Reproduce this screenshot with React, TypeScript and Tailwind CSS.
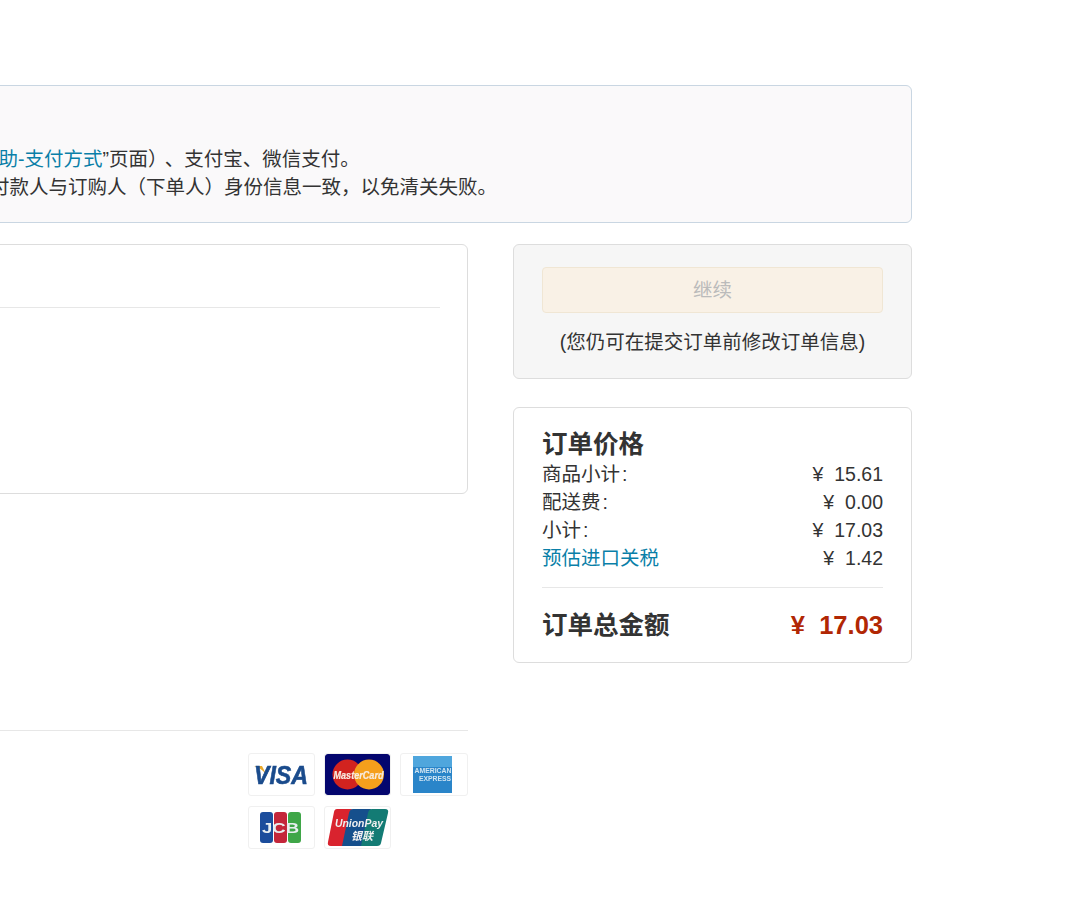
import React from "react";

const font = { fontFamily: '"Liberation Sans", "Noto Sans CJK SC", sans-serif' };

const rows = [
  { label: "商品小计", value: "15.61" },
  { label: "配送费", value: "0.00" },
  { label: "小计", value: "17.03" },
];

function CardFrame({ children }: { children: React.ReactNode }) {
  return (
    <div className="h-[43px] rounded-[3px] border border-[#f0f0f0] bg-white flex items-center justify-center overflow-hidden">
      {children}
    </div>
  );
}

function Visa() {
  return (
    <svg className="blur-[0.4px]" width="60" height="30" viewBox="0 0 60 30">
      <path d="M2 6 L10 6 L14 14 Q9 8 2 6 Z" fill="#e9a92c" />
      <text x="2" y="24" fontFamily="Liberation Sans" fontWeight="700" fontStyle="italic" fontSize="25" fill="#1a4b8c" stroke="#1a4b8c" strokeWidth="0.6" textLength="54" lengthAdjust="spacingAndGlyphs">
        VISA
      </text>
    </svg>
  );
}

function MasterCard() {
  return (
    <svg className="blur-[0.4px]" width="65" height="41" viewBox="0 0 65 41">
      <rect width="65" height="41" rx="3" fill="#04066e" />
      <circle cx="22.5" cy="20.500" r="15" fill="#d2231f" />
      <circle cx="44" cy="20.500" r="15" fill="#f59f1c" />
      <text x="33.5" y="24.500" textAnchor="middle" fontFamily="Liberation Sans" fontWeight="700" fontStyle="italic" fontSize="11" fill="#f8ece0" stroke="#f8ece0" strokeWidth="0.2" textLength="50" lengthAdjust="spacingAndGlyphs">
        MasterCard
      </text>
    </svg>
  );
}

function Amex() {
  return (
    <svg className="blur-[0.4px] mr-[3px]" width="39" height="37" viewBox="0 0 39 37">
      <rect width="39" height="37" fill="#2a85c9" />
      <rect y="0" width="39" height="11" fill="#4fa6dd" />
      <text x="20" y="17" textAnchor="middle" fontFamily="Liberation Sans" fontWeight="700" fontSize="6.5" fill="#cfe4f2" textLength="37" lengthAdjust="spacingAndGlyphs">
        AMERICAN
      </text>
      <text x="22" y="25" textAnchor="middle" fontFamily="Liberation Sans" fontWeight="700" fontSize="6.5" fill="#cfe4f2" textLength="32" lengthAdjust="spacingAndGlyphs">
        EXPRESS
      </text>
    </svg>
  );
}

function Jcb() {
  return (
    <svg className="blur-[0.4px] mr-[3px]" width="41" height="33" viewBox="0 0 41 33">
      <rect x="0" y="1" width="13" height="31" rx="3" fill="#1c4d9c" />
      <rect x="14" y="1" width="13" height="31" rx="3" fill="#c4263a" />
      <rect x="28" y="1" width="13" height="31" rx="3" fill="#3fa648" />
      <text x="20.5" y="22" textAnchor="middle" fontFamily="Liberation Sans" fontWeight="700" fontSize="15" fill="#e8eef0" textLength="37" lengthAdjust="spacingAndGlyphs">
        JCB
      </text>
    </svg>
  );
}

function UnionPay() {
  return (
    <svg className="blur-[0.4px]" width="62" height="41" viewBox="0 0 62 41">
      <path d="M8 2 H26 Q24 2 23 6 L16 39 H4 Q0 39 1 35 L7 5 Q7.500 2 10 2 Z" fill="#d9232e" />
      <path d="M24 2 H44 L36 39 H15 L22 6 Q23 2 26 2 Z" fill="#154f8c" />
      <path d="M42 2 H58 Q62 2 61 6 L54 36 Q53.500 39 50 39 H34 L41 6 Q42 2 45 2 Z" fill="#137b74" />
      <text x="32" y="19.500" textAnchor="middle" fontFamily="Liberation Sans" fontWeight="700" fontStyle="italic" fontSize="10" fill="#f0f0f0" textLength="48" lengthAdjust="spacingAndGlyphs">
        UnionPay
      </text>
      <text x="35" y="33" textAnchor="middle" fontFamily="Noto Sans CJK SC" fontWeight="700" fontStyle="italic" fontSize="11" fill="#f0f0f0">
        银联
      </text>
    </svg>
  );
}

function Price({ value }: { value: string }) {
  return <span>¥&nbsp;&nbsp;{value}</span>;
}

export default function App() {
  return (
    <div className="w-full min-h-[900px] bg-white overflow-hidden text-[19.5px] leading-[28px] text-[#333]" style={font}>
      <div className="w-[912px] pt-[85px]">
        {/* notice, runs off the left edge */}
        <div className="-ml-[300px] w-[1212px] h-[138px] rounded-[6px] border border-[#c9d6e2] bg-[#faf9fa] pt-[59px] pl-[30px] whitespace-nowrap">
          <p className="ml-[-129px]">
            我们接受以下付款方式：国际信用卡（详见“<a className="text-[#0a7fa8]">帮助-支付方式</a>”页面）<span className="ml-[7px]">、支付宝、微信支付。</span>
          </p>
          <p className="ml-[25px]">
            为确保顺利清关，请您确认付款人与订购人（下单人）身份信息一致，以免清关失败。
          </p>
        </div>

        <div className="flex gap-[45px] mt-[21px]">
          <div className="flex-1 min-w-0">
            <div className="-ml-[300px] h-[250px] rounded-[6px] border border-[#ddd] bg-white pt-[62px] pr-[27px]">
              <div className="border-t border-[#e7e7e7]" />
            </div>
            <div className="mt-[236px] border-t border-[#e7e7e7] pt-[22px]">
              <div className="ml-auto w-[220px] grid grid-cols-[67px_67px_68px] gap-x-[9px] gap-y-[10px]">
                <CardFrame><Visa /></CardFrame>
                <CardFrame><MasterCard /></CardFrame>
                <CardFrame><Amex /></CardFrame>
                <CardFrame><Jcb /></CardFrame>
                <CardFrame><UnionPay /></CardFrame>
              </div>
            </div>
          </div>

          <div className="w-[399px] shrink-0">
            <div className="h-[135px] rounded-[6px] border border-[#ddd] bg-[#f6f6f6] px-[28px] pt-[22px] text-center">
              <div className="h-[46px] rounded-[4px] border border-[#f0e6d4] bg-[#f9f1e6] text-[#bbb] flex items-center justify-center">
                继续
              </div>
              <p className="mt-[15px]">(您仍可在提交订单前修改订单信息)</p>
            </div>

            <div className="mt-[28px] h-[256px] rounded-[6px] border border-[#ddd] bg-white px-[28px] pt-[22px]">
              <h2 className="text-[25.5px] leading-[29px] mb-[1px] font-bold text-[#333]">订单价格</h2>
              {rows.map((r) => (
                <div key={r.label} className="flex justify-between h-[28px]">
                  <span>{r.label}<span className="ml-[2px]">:</span></span>
                  <Price value={r.value} />
                </div>
              ))}
              <div className="flex justify-between h-[28px]">
                <a className="text-[#0a7fa8]">预估进口关税</a>
                <Price value="1.42" />
              </div>
              <div className="mt-[15px] border-t border-[#e7e7e7]" />
              <div className="mt-[19px] flex justify-between items-center text-[25.5px] leading-[36px] font-bold">
                <span>订单总金额</span>
                <span className="text-[#b12704]">¥&nbsp;&nbsp;17.03</span>
              </div>
            </div>
          </div>
        </div>
      </div>
    </div>
  );
}
